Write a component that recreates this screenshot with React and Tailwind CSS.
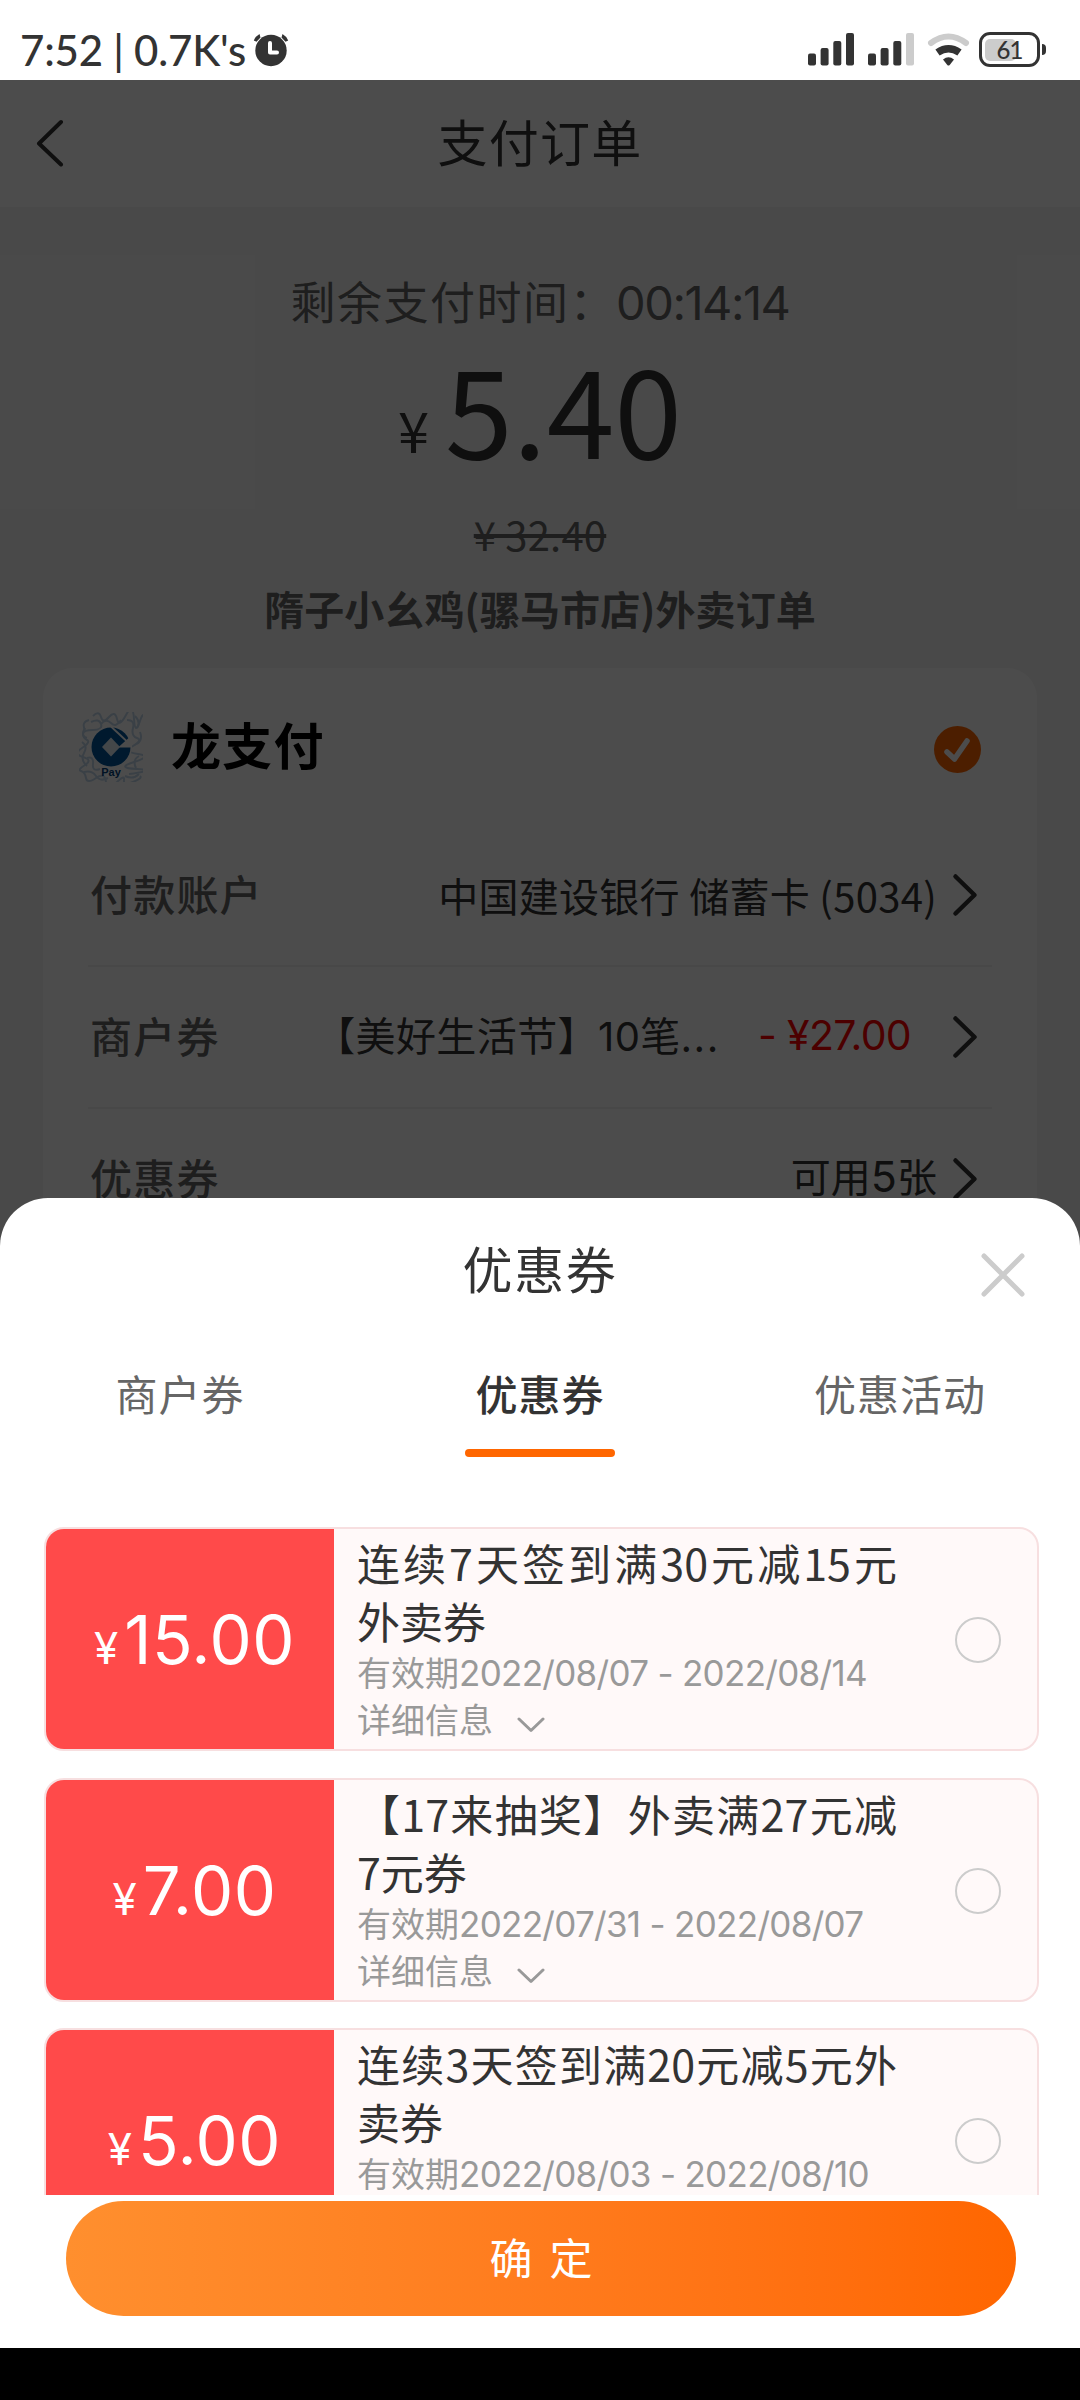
const coupons = [
  { amount: '15.00', title: '连续7天签到满30元减15元外卖券', period: '2022/08/07 - 2022/08/14' },
  { amount: '7.00', title: '【17来抽奖】外卖满27元减7元券', period: '2022/07/31 - 2022/08/07' },
  { amount: '5.00', title: '连续3天签到满20元减5元外卖券', period: '2022/08/03 - 2022/08/10' },
];

const tabs = ['商户券', '优惠券', '优惠活动'];

function StatusBar() {
  return (
    <div className="h-20 shrink-0 bg-white flex items-start justify-between pl-5 pr-[34px] text-[#333]">
      <div className="flex items-center pt-[26px]">
        <span className="font-['Lato'] font-medium text-[42px] leading-[48px] tracking-[-0.200px] whitespace-pre">
          7:52 | 0.7K's
        </span>
        <svg className="ml-[7px] w-9 h-[34px]" viewBox="0 0 36 34" fill="currentColor">
          <path d="M.8 7.500A13 13 0 0 1 6.500 1l1 3.500-4 4.200zM35.200 7.500A13 13 0 0 0 29.500 1l-1 3.500 4 4.200z" />
          <circle cx="18" cy="17.500" r="15.700" />
          <path d="M17 10v9.500h7" fill="none" stroke="#fff" strokeWidth="4" strokeLinecap="round" strokeLinejoin="round" />
        </svg>
      </div>
      <div className="flex items-center pt-8">
        <svg className="w-[164px] h-[35px]" viewBox="806 32 164 35" fill="currentColor">
          <rect x="808" y="53.500" width="8" height="12" rx="2" />
          <rect x="820.600" y="48" width="8" height="17.500" rx="2" />
          <rect x="833.300" y="41" width="8" height="24.500" rx="2" />
          <rect x="846" y="33" width="8" height="32.500" rx="2" />
          <rect x="868" y="53.500" width="8" height="12" rx="2" />
          <rect x="880.600" y="48" width="8" height="17.500" rx="2" />
          <rect x="893.300" y="41" width="8" height="24.500" rx="2" />
          <rect x="906" y="33" width="8" height="32.500" rx="2" fill="#ccc" />
          <path d="M931 43q17.500-13 35 0" fill="none" stroke="#ccc" strokeWidth="6" strokeLinecap="round" />
          <path d="M937.500 52.500q11-7.500 22 0" fill="none" stroke="currentColor" strokeWidth="7.500" />
          <path d="M943 59.500q5.500-4.500 11 0l-4.300 5.500q-1.200 1.200-2.400 0z" />
        </svg>
        <div className="ml-[9px] relative w-[61px] h-[35px] rounded-[11px] border-[3px] border-[#333] flex items-center p-[3px]">
          <div className="w-[31px] h-[22px] rounded-[5px] bg-[#ccc]" />
          <span className="absolute inset-0 flex items-center justify-center font-['Lato'] font-medium text-2xl tracking-[-1px]">
            61
          </span>
        </div>
        <div className="ml-[2px] w-1 h-[11px] rounded-r-full bg-[#333]" />
      </div>
    </div>
  );
}

function PayLogo() {
  return (
    <svg className="w-16 h-[70px]" viewBox="0 0 64 70">
      <g fill="none" stroke="#c3d8ea" strokeWidth="2">
        <path d="M14 4q6-6 8 1t8 0 8 2 9-4 8 4 6 2 5 8M12 10q8-4 10 2t-8 6-10 4 4 6-5 8 1 9 2 8-4 6 5 7 10 0 10 4 10 1 8-3 9 2 7-6" />
        <path d="M6 16q-5 8 2 10M3 30q6 4 2 11T8 54M5 60q8-2 12 4t12 2M22 12q5-6 10-1t10-3M48 8q8 0 6 8t4 10-4 8 5 8-4 8 3 7-8 5" />
        <path d="M10 8q-8 2-4 10M56 4q6 6 2 12M58 32q6-4 3-12M60 44q-7 4-3 12M46 64q8 4 14-2M8 46q7-2 6 6t7 5" />
      </g>
      <circle cx="32" cy="35" r="21" fill="#fff" />
      <circle cx="32" cy="35" r="19.500" fill="#00569c" />
      <path d="M39 35.500 53 23v12.500z" fill="#fff" />
      <path d="m32 14.500 15.500 14.500" stroke="#fff" strokeWidth="1.800" />
      <path d="m32 25.500 9 9.500-9 9.500-9-9.500z" fill="#e4edf5" />
      <text x="32" y="64" textAnchor="middle" fontSize="11" fontWeight="700" fontFamily="Liberation Sans" fill="#00407a">
        Pay
      </text>
    </svg>
  );
}

function Row({ label, children }) {
  return (
    <div className="h-[142px] pb-[6px] mx-[45px] pl-[2px] pr-[3px] flex items-center justify-between border-b-2 border-[#f2f2f2]">
      <span className="font-medium text-[42px] tracking-[1.200px] text-[#666]">{label}</span>
      <div className="flex items-center text-[40px] text-[#333]">
        {children}
        <svg className="ml-[14px] mr-[10px] mt-[5px] w-7 h-[46px] text-[#333]" viewBox="0 0 28 46" fill="none" stroke="currentColor" strokeWidth="4.500" strokeLinecap="round" strokeLinejoin="round">
          <path d="M4.500 4.500 23.500 23 4.500 41.500" />
        </svg>
      </div>
    </div>
  );
}

function OrderPage() {
  return (
    <div className="h-full bg-[#f5f5f5] overflow-hidden">
      <header className="relative h-[127px] bg-white flex items-center justify-center">
        <svg className="absolute left-[34px] top-[39px] w-8 h-12" viewBox="0 0 32 48" fill="none" stroke="#333" strokeWidth="4" strokeLinecap="round" strokeLinejoin="round">
          <path d="M27 3 5 24.500 27 45.500" />
        </svg>
        <h1 className="text-[50px] tracking-[1.300px] leading-none pb-[8px] text-[#333]">支付订单</h1>
      </header>

      <div className="pt-[61px] flex flex-col items-center text-[#666]">
        <div className="h-[66px] leading-[66px] text-[45px] tracking-[1.500px]">
          剩余支付时间：
          <span className="font-['Inter'] text-[47px] tracking-[-1.500px]">00:14:14</span>
        </div>
        <div className="h-[149px] flex items-start text-[#333]">
          <span className="text-[56px] leading-[150px] mr-[16px] pt-[20px]">¥</span>
          <span className="text-[122px] leading-[144px]">5.40</span>
        </div>
        <div className="h-[102px] flex items-center text-[40px] tracking-[0.200px] line-through decoration-[4px]">¥ 32.40</div>
        <div className="h-[46px] flex items-center text-[40px] tracking-[0.100px] font-bold">隋子小幺鸡(骡马市店)外卖订单</div>
      </div>

      <section className="mt-[37px] mx-[43px] rounded-[30px] bg-white">
        <div className="h-[157px] pl-[36px] pr-[56px] flex items-center">
          <PayLogo />
          <span className="ml-7 pb-[6px] text-[50px] tracking-[1.200px] font-bold text-black">龙支付</span>
          <svg className="ml-auto w-[47px] h-[47px] mt-[5px]" viewBox="0 0 47 47">
            <circle cx="23.500" cy="23.500" r="23.500" fill="#ff6600" />
            <path d="m13 26 7.500 7L33 15" fill="none" stroke="#fff" strokeWidth="5.500" strokeLinecap="round" strokeLinejoin="round" />
          </svg>
        </div>
        <Row label="付款账户">
          <span className="pt-[6px] tracking-[0.300px]">中国建设银行 储蓄卡 (5034)</span>
        </Row>
        <Row label="商户券">
          <span className="pt-[2px] tracking-[0.400px]">
            【美好生活节】<span className="font-['Inter']">10</span>笔<span className="tracking-[2px]">...</span>
          </span>
          <span className="pt-[4px] ml-[38px] mr-[26px] font-['Inter'] text-[41px] tracking-[-0.700px] text-[#f00]">- ¥27.00</span>
        </Row>
        <Row label="优惠券">
          <span>可用<span className="font-['Inter'] text-[43px]">5</span>张</span>
        </Row>
      </section>
    </div>
  );
}

function Coupon({ amount, title, period }) {
  return (
    <div className="h-[224px] shrink-0 rounded-[20px] border-2 border-[#f7dfe0] bg-[#fff9f9] flex overflow-hidden">
      <div className="w-[288px] pl-[9px] bg-[#ff4a4a] text-white font-['Inter'] flex items-baseline justify-center leading-[221px]">
        <span className="text-[44px] mr-[6px]">¥</span>
        <span className="text-[67px] tracking-[0.500px]">{amount}</span>
      </div>
      <div className="w-[540px] ml-[23px] pt-[4px]">
        <p className="text-[43px] leading-[58px] text-justify text-[#333]">{title}</p>
        <p className="text-[34px] leading-[46px] text-[#999] whitespace-nowrap">
          有效期<span className="font-['Inter'] text-[35px] tracking-[-0.700px]">{period}</span>
        </p>
        <p className="text-[34px] leading-[46px] text-[#999] flex items-center">
          详细信息
          <svg className="ml-6 mt-3 w-7 h-4" viewBox="0 0 28 16" fill="none" stroke="#999" strokeWidth="3" strokeLinecap="round" strokeLinejoin="round">
            <path d="m2 2 12 11.500L26 2" />
          </svg>
        </p>
      </div>
      <span className="self-center ml-auto mr-[36px] mt-[2px] w-[46px] h-[46px] rounded-full border-2 border-[#ccc]" />
    </div>
  );
}

function CouponSheet() {
  return (
    <div className="h-[1150px] bg-white rounded-t-[48px] flex flex-col">
      <div className="relative h-[142px] flex justify-center">
        <h2 className="text-[50px] tracking-[1.700px] leading-[138px] text-[#333]">优惠券</h2>
        <svg className="absolute right-[54px] top-[54px] w-[46px] h-[46px]" viewBox="0 0 46 46" stroke="#ccc" strokeWidth="5" strokeLinecap="round">
          <path d="m4 4 38 38M42 4 4 42" />
        </svg>
      </div>
      <div className="h-[187px] grid grid-cols-3 text-[42px] text-[#666]">
        {tabs.map((tab, i) => (
          <div key={tab} className="flex flex-col items-center">
            <span className={i === 1 ? 'leading-[106px] tracking-[1px] font-medium text-[#333]' : 'leading-[106px] tracking-[1px]'}>
              {tab}
            </span>
            {i === 1 && <span className="mt-[3px] w-[150px] h-2 rounded-full bg-[#ff6600]" />}
          </div>
        ))}
      </div>
      <div className="h-[668px] shrink-0 overflow-hidden flex flex-col gap-[26.500px] pl-[44px] pr-[41px]">
        {coupons.map((c) => (
          <Coupon key={c.amount} {...c} />
        ))}
      </div>
      <button
        type="button"
        className="mt-[6px] ml-[66px] mr-[64px] h-[115px] shrink-0 rounded-full bg-linear-to-r from-[#ff8f2e] to-[#ff6600] text-white text-[43px] pb-1 flex items-center justify-center gap-[17px]"
      >
        <span>确</span>
        <span>定</span>
      </button>
    </div>
  );
}

export default function App() {
  return (
    <div className="w-[1080px] h-[2400px] flex flex-col overflow-hidden bg-black font-['Noto_Sans_CJK_SC',sans-serif]">
      <StatusBar />
      <div className="relative h-[2268px] shrink-0">
        <OrderPage />
        <div className="absolute inset-0 bg-black/70 flex flex-col justify-end">
          <CouponSheet />
        </div>
      </div>
    </div>
  );
}
